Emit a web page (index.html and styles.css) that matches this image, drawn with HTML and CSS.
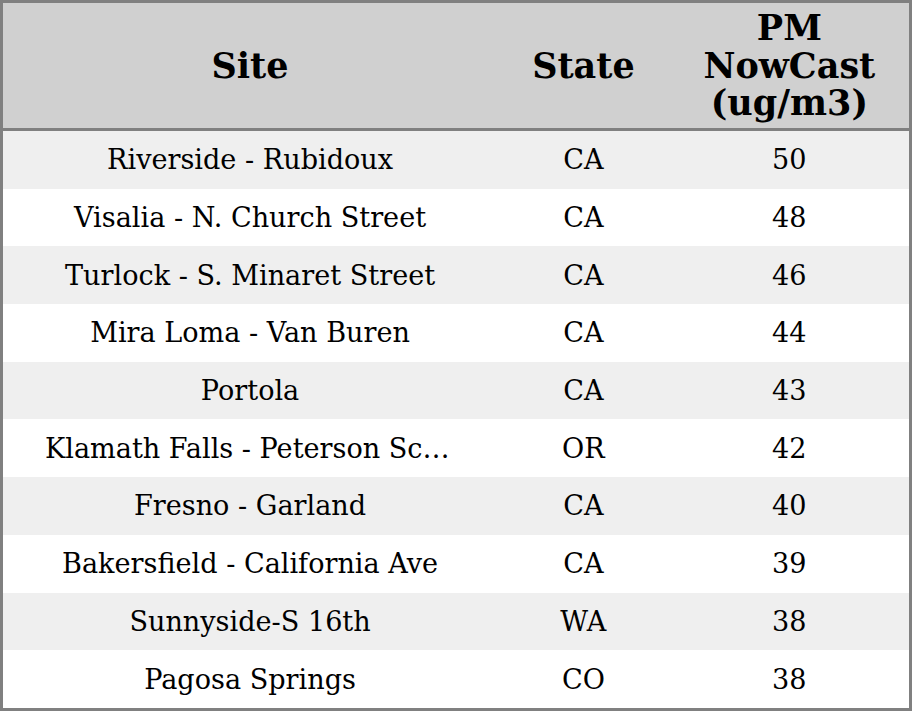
FILE: index.html
```html
<!DOCTYPE html>
<html>
<head>
<meta charset="utf-8">
<link rel="stylesheet" href="styles.css">
</head>
<body>
<table class="tbl">
  <colgroup>
    <col class="c-site"><col class="c-state"><col class="c-pm">
  </colgroup>
  <thead>
    <tr><th>Site</th><th>State</th><th>PM<br>NowCast<br>(ug/m3)</th></tr>
  </thead>
  <tbody>
    <tr><td><div class="trunc">Riverside - Rubidoux</div></td><td>CA</td><td>50</td></tr>
    <tr><td><div class="trunc">Visalia - N. Church Street</div></td><td>CA</td><td>48</td></tr>
    <tr><td><div class="trunc">Turlock - S. Minaret Street</div></td><td>CA</td><td>46</td></tr>
    <tr><td><div class="trunc">Mira Loma - Van Buren</div></td><td>CA</td><td>44</td></tr>
    <tr><td><div class="trunc">Portola</div></td><td>CA</td><td>43</td></tr>
    <tr><td><div class="trunc">Klamath Falls - Peterson School</div></td><td>OR</td><td>42</td></tr>
    <tr><td><div class="trunc">Fresno - Garland</div></td><td>CA</td><td>40</td></tr>
    <tr><td><div class="trunc">Bakersfield - California Ave</div></td><td>CA</td><td>39</td></tr>
    <tr><td><div class="trunc">Sunnyside-S 16th</div></td><td>WA</td><td>38</td></tr>
    <tr><td><div class="trunc">Pagosa Springs</div></td><td>CO</td><td>38</td></tr>
  </tbody>
</table>
</body>
</html>
```
FILE: styles.css
```css
html, body { margin: 0; padding: 0; background: #ffffff; }
.tbl {
  width: 912px;
  height: 711px;
  border-collapse: collapse;
  table-layout: fixed;
  border: 3px solid #808080;
  font-family: "DejaVu Serif", serif;
  color: #000;
}
.c-site { width: 494px; }
.c-state { width: 172px; }
.c-pm { width: 240px; }
thead th {
  background: #d0d0d0;
  font-size: 35px;
  font-weight: bold;
  height: 125px;
  padding: 0;
  line-height: 37.5px;
  text-align: center;
  vertical-align: middle;
  border-bottom: 3px solid #808080;
}
tbody td {
  font-size: 27.1px;
  height: 57.7px;
  padding: 0;
  text-align: center;
  vertical-align: middle;
}
tbody tr:nth-child(odd) td { background: #efefef; }
tbody tr:nth-child(even) td { background: #ffffff; }
.trunc {
  padding: 0 42px;
  white-space: nowrap;
  overflow: hidden;
  text-overflow: ellipsis;
}
```
